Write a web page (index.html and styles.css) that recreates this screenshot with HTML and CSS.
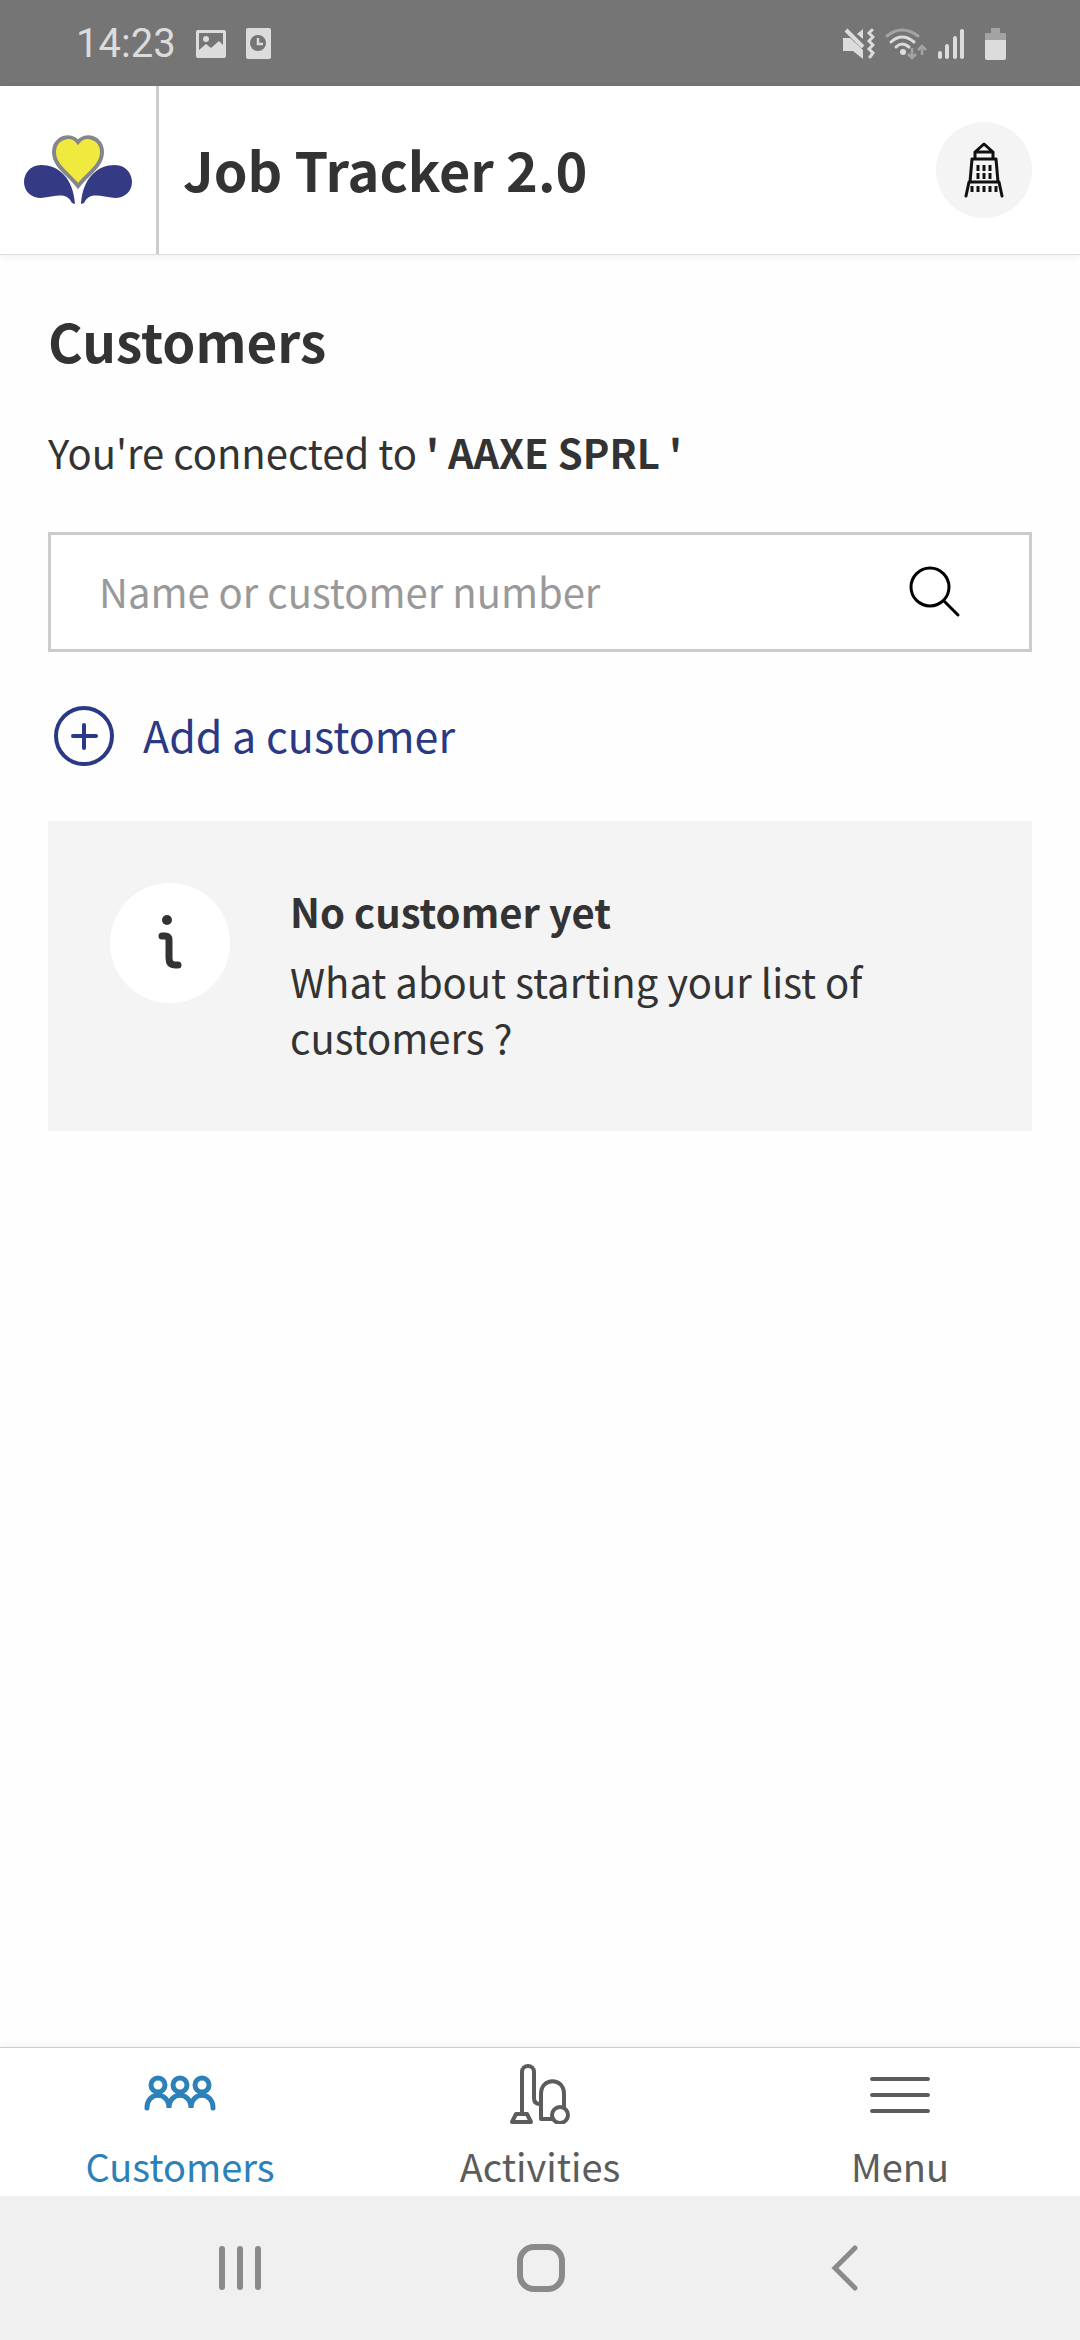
FILE: index.html
```
<!DOCTYPE html>
<html lang="en">
<head>
    <meta charset="UTF-8">
    <meta name="viewport" content="width=device-width, initial-scale=1.0">
    <title>Job Tracker 2.0</title>
    <link rel="stylesheet" href="styles.css">
</head>
<body>
    <div class="status-bar">
        <div class="status-left">
            <span class="clock">14:23</span>
            <svg width="30" height="30" viewBox="0 0 30 30">
                <path fill="#dcdcdc" fill-rule="evenodd" d="M2 1h26a2 2 0 0 1 2 2v24a2 2 0 0 1-2 2H2a2 2 0 0 1-2-2V3a2 2 0 0 1 2-2zM3 4v17l7-6 5 4 8-7 4 4V4z"/>
                <circle cx="10" cy="10" r="3" fill="#dcdcdc"/>
            </svg>
            <svg width="25" height="32" viewBox="0 0 25 32">
                <rect width="25" height="31" rx="2" fill="#dcdcdc"/>
                <circle cx="12" cy="15" r="8" fill="#757575"/>
                <path d="M12 10v6h5" fill="none" stroke="#dcdcdc" stroke-width="2.5"/>
            </svg>
        </div>
        <div class="status-right">
            <svg width="32" height="32" viewBox="0 0 32 32">
                <path fill="#dcdcdc" d="M0 10h7l13 12v9l-10-8H0zM14 6l6-5v10z"/>
                <path d="M3 2l17 17" stroke="#dcdcdc" stroke-width="4"/>
                <path d="M29 2l-3 3 4 4-4 4 4 4-4 4 4 4-3 4" fill="none" stroke="#dcdcdc" stroke-width="3" stroke-linecap="round"/>
            </svg>
            <svg width="42" height="32" viewBox="0 0 42 32">
                <g fill="none" stroke-width="3" stroke-linecap="round">
                    <path d="M2 8Q17-4 33 8" stroke="#a3a3a3"/>
                    <path d="M6 14q11-10 23 0M11 19q6-6 13 0" stroke="#dcdcdc"/>
                </g>
                <circle cx="18" cy="24" r="3" fill="#dcdcdc"/>
                <path d="M27 20v10m-4-4l4 4 4-4M37 27V18m-4 4l4-4 4 4" fill="none" stroke="#a3a3a3" stroke-width="2.5"/>
            </svg>
            <svg width="28" height="32" viewBox="0 0 28 32">
                <path d="M3 25v4M10 18v11M18 10v19M25 3v26" stroke="#dcdcdc" stroke-width="4" stroke-linecap="round"/>
            </svg>
            <svg class="battery" width="21" height="32" viewBox="0 0 21 32">
                <path d="M6 0h9v5h6v7H0V5h6z" fill="#a3a3a3"/>
                <path d="M0 12h21v18a2 2 0 0 1-2 2H2a2 2 0 0 1-2-2z" fill="#dcdcdc"/>
            </svg>
        </div>
    </div>

    <header class="header">
        <a href="#" class="logo" aria-label="Home">
            <svg width="108" height="70" viewBox="0 0 108 70">
                <path d="M54 51C44 38 30 31 30 17 30 2 47-2 54 7 61-2 78 2 78 17 78 31 64 38 54 51z" fill="#f0ea3f" stroke="#85868a" stroke-width="4"/>
                <path d="M51 69C49 42 34 30 17 30 6 30 0 39 0 47 0 57 8 63 17 63 31 62 42 56 48 68zM57 69C59 42 74 30 91 30 102 30 108 39 108 47 108 57 100 63 91 63 77 62 66 56 60 68z" fill="#343a84"/>
            </svg>
        </a>
        <div class="title">Job Tracker 2.0</div>
        <button class="company" aria-label="Company">
            <svg width="40" height="56" viewBox="0 0 40 56">
                <g fill="none" stroke="#111" stroke-width="3" stroke-linejoin="round" stroke-linecap="round">
                    <path d="M11 10l9-8 9 8zM11 10v7M29 10v7M9 17h22M8 17L6 40M32 17l2 23M5 40h30M5 40L2 54M35 40l3 14"/>
                </g>
                <path d="M14 23v6M20 23v6M26 23v6M14 31v6M20 31v6M26 31v6M8 44v6M14 44v6M20 44v6M26 44v6M32 44v6" stroke="#111" stroke-width="3"/>
            </svg>
        </button>
    </header>

    <main class="content">
        <h1>Customers</h1>
        <p class="connected">You're connected to <strong>' AAXE SPRL '</strong></p>

        <form class="search">
            <input type="text" placeholder="Name or customer number" aria-label="Name or customer number">
            <button type="button" aria-label="Search">
                <svg width="52" height="52" viewBox="0 0 52 52">
                    <g fill="none" stroke="#000" stroke-width="3" stroke-linecap="round">
                        <circle cx="21" cy="21" r="19"/>
                        <path d="M35 35l14 14"/>
                    </g>
                </svg>
            </button>
        </form>

        <a href="#" class="add">
            <svg width="62" height="62" viewBox="0 0 62 62">
                <g fill="none" stroke="#2b3884" stroke-width="4" stroke-linecap="round">
                    <circle cx="31" cy="31" r="28"/>
                    <path d="M31 20v23M20 31h23"/>
                </g>
            </svg>
            <span>Add a customer</span>
        </a>

        <section class="notice">
            <div class="notice-icon">
                <svg width="28" height="60" viewBox="0 0 28 60">
                    <circle cx="11" cy="7" r="5" fill="#333"/>
                    <path d="M6 23h3q4 0 4 4v18q0 7 6 7h3" fill="none" stroke="#333" stroke-width="7" stroke-linecap="round"/>
                </svg>
            </div>
            <div class="notice-text">
                <h2>No customer yet</h2>
                <p>What about starting your list of customers ?</p>
            </div>
        </section>
    </main>

    <nav class="tabs">
        <a href="#" class="tab active">
            <svg width="72" height="60" viewBox="0 0 72 60">
                <g fill="none" stroke="currentColor" stroke-width="5" stroke-linecap="round">
                    <circle cx="14" cy="21" r="7"/>
                    <circle cx="36" cy="21" r="7"/>
                    <circle cx="58" cy="21" r="7"/>
                    <path d="M3 44c0-17 22-17 22 0 0-17 22-17 22 0 0-17 22-17 22 0"/>
                </g>
            </svg>
            <span>Customers</span>
        </a>
        <a href="#" class="tab">
            <svg width="60" height="60" viewBox="0 0 60 60">
                <g fill="none" stroke="currentColor" stroke-width="4" stroke-linejoin="round">
                    <path d="M12 50V8c0-8 12-8 12 0v26q0 6 6 6M6 50h11l4 8H2zM43 55H31V30c0-17 23-17 23 0v14"/>
                    <circle cx="50" cy="51" r="8"/>
                </g>
            </svg>
            <span>Activities</span>
        </a>
        <a href="#" class="tab">
            <svg width="60" height="60" viewBox="0 0 60 60">
                <path d="M2 15h56M2 31h56M2 47h56" stroke="currentColor" stroke-width="4" stroke-linecap="round"/>
            </svg>
            <span>Menu</span>
        </a>
    </nav>

    <div class="system-nav">
        <button aria-label="Recent apps">
            <svg width="48" height="48" viewBox="0 0 48 48">
                <path d="M6 5v38M24 5v38M42 5v38" stroke="#8a8a8a" stroke-width="6" stroke-linecap="round"/>
            </svg>
        </button>
        <button aria-label="Home screen">
            <svg width="48" height="48" viewBox="0 0 48 48">
                <rect x="3" y="3" width="42" height="42" rx="14" fill="none" stroke="#8a8a8a" stroke-width="6"/>
            </svg>
        </button>
        <button aria-label="Back">
            <svg width="48" height="48" viewBox="0 0 48 48">
                <path d="M37 4L17 24l20 20" fill="none" stroke="#8a8a8a" stroke-width="5" stroke-linecap="round"/>
            </svg>
        </button>
    </div>
</body>
</html>
```
FILE: styles.css
```
* {
    box-sizing: border-box;
}

body {
    margin: 0;
    min-height: 100vh;
    display: flex;
    flex-direction: column;
    font-family: "Noto Sans CJK SC", "Noto Sans", sans-serif;
    font-size: 40px;
    line-height: 56px;
    color: #333;
    background-color: #fefefe;
}

h1, h2, p {
    margin: 0;
}

a {
    text-decoration: none;
}

button {
    padding: 0;
    border: none;
    background: none;
    cursor: pointer;
}

svg {
    display: block;
    flex-shrink: 0;
}

.status-bar {
    display: flex;
    justify-content: space-between;
    align-items: center;
    height: 86px;
    padding: 2px 74px 0 76px;
    background-color: #757575;
}

.status-left, .status-right {
    display: flex;
    align-items: center;
}

.status-left {
    gap: 20px;
}

.status-right {
    gap: 10px;
}

.battery {
    margin-left: 10px;
}

.clock {
    font-family: Roboto, sans-serif;
    color: #dcdcdc;
}

.header {
    display: flex;
    align-items: center;
    height: 169px;
    padding-right: 48px;
    background-color: #fff;
    border-bottom: 1px solid #ddd;
    box-shadow: 0 2px 8px rgba(0, 0, 0, 0.06);
}

.logo {
    display: flex;
    align-items: center;
    align-self: stretch;
    padding: 0 24px;
    border-right: 3px solid #ccc;
}

.title {
    flex: 1;
    padding: 0 0 2px 24px;
    font-size: 54px;
    font-weight: bold;
}

.company {
    display: flex;
    align-items: center;
    justify-content: center;
    width: 96px;
    height: 96px;
    border-radius: 50%;
    background-color: #f4f4f4;
}

.content {
    flex: 1;
    padding: 53px 48px;
}

h1 {
    font-size: 53px;
    line-height: 64px;
    font-weight: 600;
}

.connected {
    margin-top: 52px;
}

.connected strong {
    font-weight: 600;
}

.search {
    display: flex;
    align-items: center;
    height: 120px;
    margin-top: 52px;
    padding: 0 68px 0 48px;
    border: 3px solid #ccc;
    background-color: #fff;
}

.search input {
    flex: 1;
    min-width: 0;
    padding: 0 0 3px;
    border: none;
    outline: none;
    font: inherit;
    color: #333;
}

.search input::placeholder {
    color: #999;
    opacity: 1;
}

.add {
    display: flex;
    align-items: center;
    gap: 28px;
    margin-top: 53px;
    padding-left: 5px;
    font-size: 43px;
    color: #2b3884;
}

.add span {
    padding-bottom: 4px;
}

.notice {
    display: flex;
    gap: 60px;
    margin-top: 54px;
    padding: 62px 62px 66px;
    background-color: #f4f4f4;
}

.notice-icon {
    display: flex;
    align-items: center;
    justify-content: center;
    flex-shrink: 0;
    width: 120px;
    height: 120px;
    border-radius: 50%;
    background-color: #fff;
}

.notice h2 {
    margin-bottom: 14px;
    font-size: 40px;
    font-weight: 600;
}

.tabs {
    display: grid;
    grid-template-columns: repeat(3, 1fr);
    border-top: 1px solid #ccc;
    background-color: #fff;
    box-shadow: 0 -2px 8px rgba(0, 0, 0, 0.05);
}

.tab {
    display: flex;
    flex-direction: column;
    align-items: center;
    gap: 14px;
    padding: 16px 0 2px;
    font-size: 38px;
    color: #5c5c5c;
}

.tab.active {
    color: #2b81b8;
}

.system-nav {
    display: flex;
    justify-content: space-between;
    align-items: center;
    height: 144px;
    padding: 0 214px 0 216px;
    background-color: #f0f0f0;
}
```
